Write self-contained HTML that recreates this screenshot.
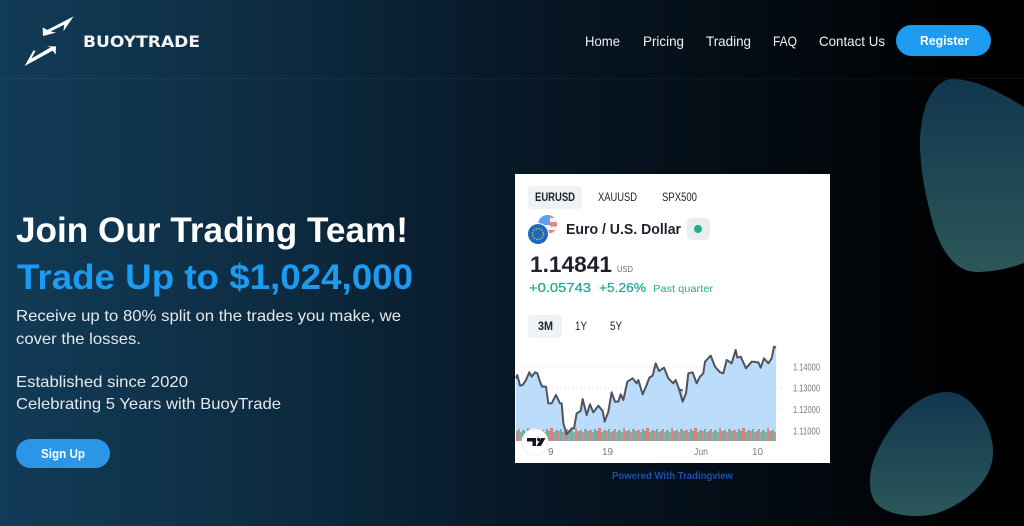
<!DOCTYPE html>
<html lang="en"><head><meta charset="utf-8"><title>BuoyTrade</title>
<style>
html,body{margin:0;padding:0;width:1024px;height:526px;overflow:hidden;background:#000}
svg{display:block}
text{font-family:"Liberation Sans",sans-serif}
.nav{font-size:14px;fill:#f0f2f4}
.w{fill:#1e222d}
.g{fill:#22ab94}
.ax{font-size:10px;fill:#777a85}
</style></head><body>
<svg width="1024" height="526" viewBox="0 0 1024 526" xmlns="http://www.w3.org/2000/svg">
<defs>
<linearGradient id="bg" x1="0" x2="1" y1="0" y2="0">
<stop offset="0" stop-color="#123b57"/><stop offset=".25" stop-color="#0d2d43"/><stop offset=".5" stop-color="#071827"/><stop offset=".75" stop-color="#030b12"/><stop offset=".95" stop-color="#000"/>
</linearGradient>
<linearGradient id="bl" x1="0" x2="0" y1="0" y2="1"><stop offset="0" stop-color="#12364f"/><stop offset="1" stop-color="#2b5759"/></linearGradient>
<clipPath id="fc"><circle cx="547.500" cy="224.500" r="9.500"/></clipPath>
<pattern id="vol" patternUnits="userSpaceOnUse" x="516" y="428" width="48" height="13">
<rect x="0" y="3" width="2" height="10" fill="#969ea0"/><rect x="2" y="1" width="2" height="12" fill="#d98580"/><rect x="4" y="4" width="2" height="9" fill="#84b0aa"/><rect x="6" y="2" width="3" height="11" fill="#6bb3a5"/><rect x="9" y="4" width="2" height="9" fill="#a0a2a5"/><rect x="11" y="0" width="2" height="13" fill="#db857e"/><rect x="13" y="3" width="3" height="10" fill="#9a9da1"/><rect x="16" y="2" width="2" height="11" fill="#6ab3a4"/><rect x="18" y="4" width="2" height="9" fill="#d49089"/><rect x="20" y="1" width="3" height="12" fill="#98a1a5"/><rect x="23" y="3" width="2" height="10" fill="#70b3a6"/><rect x="25" y="2" width="3" height="11" fill="#db867f"/><rect x="28" y="4" width="2" height="9" fill="#9da1a5"/><rect x="30" y="1" width="2" height="12" fill="#66b0a2"/><rect x="32" y="3" width="2" height="10" fill="#909c9e"/><rect x="34" y="0" width="3" height="13" fill="#d6837e"/><rect x="37" y="4" width="2" height="9" fill="#76b0a6"/><rect x="39" y="2" width="3" height="11" fill="#9c9da2"/><rect x="42" y="3" width="2" height="10" fill="#db8b85"/><rect x="44" y="1" width="2" height="12" fill="#6fb1a5"/><rect x="46" y="4" width="2" height="9" fill="#9ea2a4"/>
</pattern>
</defs>
<rect width="1024" height="526" fill="url(#bg)"/>
<rect y="78" width="1024" height="1" fill="#fff" opacity=".05"/>
<path fill="url(#bl)" d="M953 79C975 79 1000 92 1024 107L1024 263C1008 269 992 272 977 272C955 272 940 250 932 220C924 190 920 165 920 143C920 110 932 79 953 79Z"/>
<path fill="url(#bl)" d="M947 392C965 392 978 408 987 425C992 436 993 445 993 453C993 478 970 500 943 511C933 515 925 516 917 516C900 516 884 512 876 503C871 497 870 489 870 480C870 462 882 440 893 425C908 405 928 392 947 392Z"/>

<!-- logo -->
<g transform="translate(20 12) scale(.3333)" fill="#fff">
<polygon points="161,13 82,54 68,46 69,72 108,62 92,58 133,38 130,58"/>
<polygon points="14,162 40,116 47,116 34,140 92,106 80,103 108,103 107,128 98,116"/>
</g>
<text x="83" y="47" font-size="16" font-weight="700" fill="#f2f4f5" textLength="117" lengthAdjust="spacingAndGlyphs" style="font-family:'DejaVu Sans',sans-serif">BUOYTRADE</text>

<!-- nav -->
<text class="nav" x="585" y="46" textLength="35" lengthAdjust="spacingAndGlyphs">Home</text>
<text class="nav" x="643" y="46" textLength="41" lengthAdjust="spacingAndGlyphs">Pricing</text>
<text class="nav" x="706" y="46" textLength="45" lengthAdjust="spacingAndGlyphs">Trading</text>
<text class="nav" x="773" y="46" textLength="24" lengthAdjust="spacingAndGlyphs">FAQ</text>
<text class="nav" x="819" y="46" textLength="66" lengthAdjust="spacingAndGlyphs">Contact Us</text>
<rect x="896" y="25" width="95" height="31" rx="15.5" fill="#1d9bf0"/>
<text x="920" y="45" font-size="12.5" font-weight="700" fill="#fff" textLength="49" lengthAdjust="spacingAndGlyphs">Register</text>

<!-- hero -->
<text x="16" y="242" font-size="35" font-weight="700" fill="#fff" textLength="392" lengthAdjust="spacingAndGlyphs">Join Our Trading Team!</text>
<text x="17" y="289" font-size="35" font-weight="700" fill="#1d9bf0" textLength="396" lengthAdjust="spacingAndGlyphs">Trade Up to $1,024,000</text>
<g font-size="16" fill="#e6e9eb">
<text x="16" y="321" textLength="385" lengthAdjust="spacingAndGlyphs">Receive up to 80% split on the trades you make, we</text>
<text x="16" y="344" textLength="125" lengthAdjust="spacingAndGlyphs">cover the losses.</text>
<text x="16" y="387" textLength="172" lengthAdjust="spacingAndGlyphs">Established since 2020</text>
<text x="16" y="409" textLength="265" lengthAdjust="spacingAndGlyphs">Celebrating 5 Years with BuoyTrade</text>
</g>
<rect x="16" y="439" width="94" height="29" rx="14.5" fill="#2b95e8"/>
<text x="41" y="458" font-size="12.5" font-weight="700" fill="#fff" textLength="44" lengthAdjust="spacingAndGlyphs">Sign Up</text>

<!-- widget -->
<rect x="515" y="174" width="315" height="289" fill="#fff"/>
<rect x="528" y="186" width="54" height="23" rx="4" fill="#f0f3f5"/>
<g font-size="12">
<text class="w" x="535" y="201" font-weight="700" textLength="40" lengthAdjust="spacingAndGlyphs">EURUSD</text>
<text class="w" x="598" y="201" textLength="39" lengthAdjust="spacingAndGlyphs">XAUUSD</text>
<text class="w" x="662" y="201" textLength="35" lengthAdjust="spacingAndGlyphs">SPX500</text>
</g>
<g clip-path="url(#fc)">
<rect x="538" y="215" width="20" height="20" fill="#f7eeee"/>
<rect x="538" y="215" width="12" height="10" fill="#5fa0ea"/>
<rect x="538" y="225" width="12" height="10" fill="#f3f3f6"/>
<rect x="550" y="215" width="8" height="3" fill="#e0858a"/>
<rect x="550" y="222" width="8" height="4.500" fill="#e0858a"/>
<rect x="540" y="230" width="18" height="3" fill="#e0858a"/>
</g>
<circle cx="538" cy="234" r="11" fill="#fff"/>
<circle cx="538" cy="234" r="10" fill="#1f68c0"/>
<circle cx="538" cy="234" r="5.500" fill="none" stroke="#c9bd5a" stroke-width="1.4" stroke-dasharray="1.5 1.4"/>
<text class="w" x="566" y="234" font-size="14.5" font-weight="700" textLength="115" lengthAdjust="spacingAndGlyphs">Euro / U.S. Dollar</text>
<rect x="687" y="218" width="23" height="22" rx="5" fill="#e8eef0"/>
<circle cx="698" cy="229" r="4" fill="#22ab94"/>
<text class="w" x="530" y="272" font-size="22" font-weight="700" fill="#131722" textLength="82" lengthAdjust="spacingAndGlyphs">1.14841</text>
<text x="617" y="272" font-size="8.5" fill="#6a6d78" textLength="16" lengthAdjust="spacingAndGlyphs">USD</text>
<g stroke="#22ab94" stroke-width=".3">
<text class="g" x="529" y="292" font-size="13" textLength="62" lengthAdjust="spacingAndGlyphs">+0.05743</text>
<text class="g" x="599" y="292" font-size="13" textLength="47" lengthAdjust="spacingAndGlyphs">+5.26%</text>
</g>
<text class="g" x="653" y="292" font-size="10.5" textLength="60" lengthAdjust="spacingAndGlyphs">Past quarter</text>
<rect x="528" y="315" width="34" height="23" rx="4" fill="#f0f3f5"/>
<g font-size="12">
<text class="w" x="538" y="330" font-weight="700" textLength="15" lengthAdjust="spacingAndGlyphs">3M</text>
<text class="w" x="575" y="330" textLength="12" lengthAdjust="spacingAndGlyphs">1Y</text>
<text class="w" x="610" y="330" textLength="12" lengthAdjust="spacingAndGlyphs">5Y</text>
</g>

<!-- chart -->
<g stroke="#d8dbe0" stroke-width="1" stroke-dasharray="1 3">
<line x1="516" x2="782" y1="367" y2="367"/><line x1="516" x2="782" y1="388" y2="388"/><line x1="516" x2="782" y1="409" y2="409"/><line x1="516" x2="782" y1="431" y2="431"/>
</g>
<g transform="translate(510 335) scale(.33333)">
<path fill="#bcdcfb" d="M18 130L22 120L30 152L38 150L48 135L58 112L65 125L75 112L82 115L90 140L96 155L108 155L115 205L125 205L138 180L150 205L155 205L160 265L170 298L185 280L192 280L200 235L212 228L218 192L230 240L240 208L250 232L265 212L278 228L284 260L295 230L305 172L315 200L325 200L332 178L340 195L352 140L368 130L380 145L385 135L398 178L410 150L418 128L428 122L437 85L447 108L462 98L475 130L490 145L497 135L508 165L520 165L520 318L18 318Z"/>
</g>
<g transform="translate(670 335) scale(.33333)">
<path fill="#bcdcfb" d="M20 165L28 165L38 200L48 175L55 115L68 112L80 145L90 125L100 115L105 80L122 62L135 95L150 112L160 115L170 75L185 85L197 45L202 68L212 65L228 100L245 80L265 82L272 98L282 70L295 85L305 70L312 35L318 38L318 318L20 318Z"/>
</g>
<rect x="516" y="428" width="260" height="13" fill="url(#vol)"/>
<g fill="none" stroke="#50535e" stroke-width="6" stroke-linejoin="round">
<polyline transform="translate(510 335) scale(.33333)" points="18,130 22,120 30,152 38,150 48,135 58,112 65,125 75,112 82,115 90,140 96,155 108,155 115,205 125,205 138,180 150,205 155,205 160,265 170,298 185,280 192,280 200,235 212,228 218,192 230,240 240,208 250,232 265,212 278,228 284,260 295,230 305,172 315,200 325,200 332,178 340,195 352,140 368,130 380,145 385,135 398,178 410,150 418,128 428,122 437,85 447,108 462,98 475,130 490,145 497,135 508,165 518,165"/>
<polyline transform="translate(670 335) scale(.33333)" points="28,165 38,200 48,175 55,115 68,112 80,145 90,125 100,115 105,80 122,62 135,95 150,112 160,115 170,75 185,85 197,45 202,68 212,65 228,100 245,80 265,82 272,98 282,70 295,85 305,70 312,35 318,38"/>
</g>
<text class="ax" x="793" y="370.500" textLength="27" lengthAdjust="spacingAndGlyphs">1.14000</text>
<text class="ax" x="793" y="391.500" textLength="27" lengthAdjust="spacingAndGlyphs">1.13000</text>
<text class="ax" x="793" y="413" textLength="27" lengthAdjust="spacingAndGlyphs">1.12000</text>
<text class="ax" x="793" y="434.500" textLength="27" lengthAdjust="spacingAndGlyphs">1.11000</text>
<text class="ax" x="548" y="455">9</text>
<text class="ax" x="602" y="455">19</text>
<text class="ax" x="694" y="455" textLength="14" lengthAdjust="spacingAndGlyphs">Jun</text>
<text class="ax" x="752" y="455">10</text>
<circle cx="535" cy="442" r="13" fill="#fff" stroke="#eceef0" stroke-width="1"/>
<path fill="#131722" d="M527 438H536V446H532.500V441.500H527Z"/>
<circle cx="538.500" cy="439.500" r="1.600" fill="#131722"/>
<path fill="#131722" d="M541 438H545.500L541 446H536.500Z"/>

<text x="612" y="479" font-size="10" font-weight="700" fill="#1a50ad" textLength="121" lengthAdjust="spacingAndGlyphs">Powered With Tradingview</text>
</svg>
</body></html>
